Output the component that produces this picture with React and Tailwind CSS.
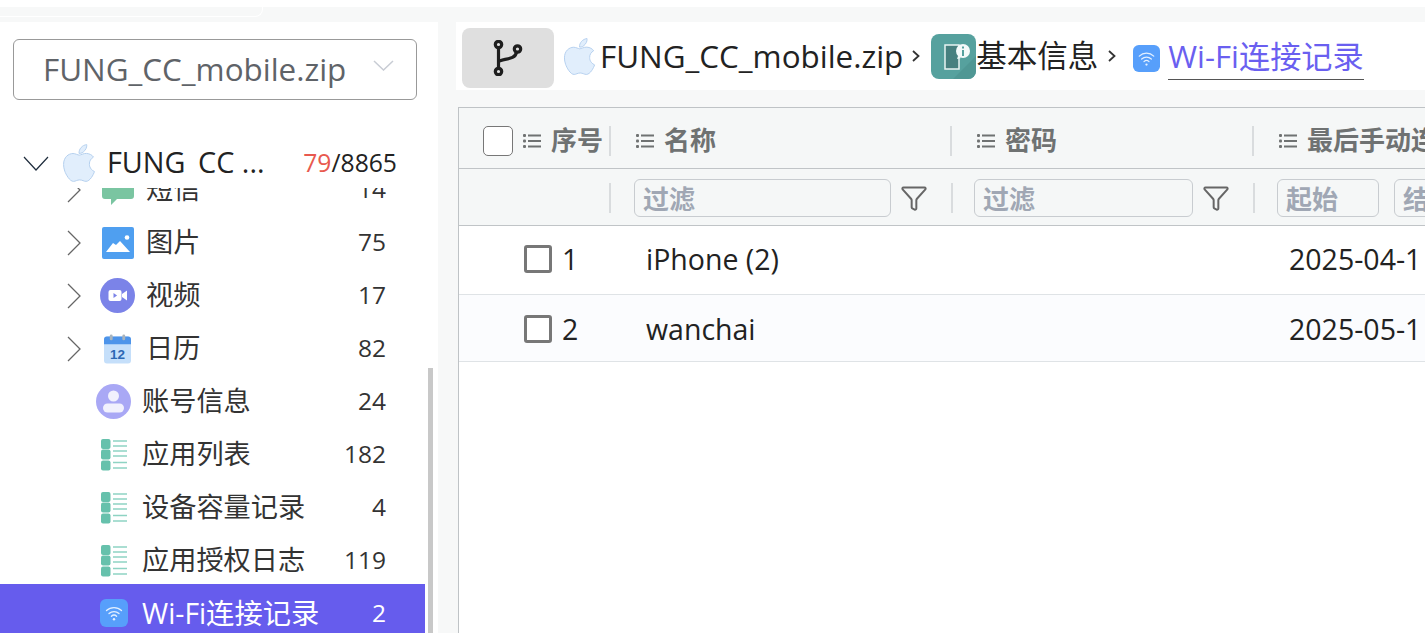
import { Funnel } from "lucide-react";
import { FaApple } from "react-icons/fa";

const AppleIcon = ({ className }) => (
  <FaApple className={className} fill="#e1eefc" stroke="#b4cfee" strokeWidth={12} />
);

const WifiIcon = ({ className }) => (
  <svg viewBox="0 0 28 28" className={className}>
    <rect width="28" height="28" rx="6" fill="#579ffb" />
    <g fill="none" stroke="#e4f0ff" strokeWidth="1.3" strokeLinecap="round">
      <path d="M6.5 11.5a11 11 0 0 1 15 0" />
      <path d="M9 14.5a7.4 7.4 0 0 1 10 0" />
      <path d="M11.4 17.2a3.8 3.8 0 0 1 5.2 0" />
    </g>
    <circle cx="14" cy="20.3" r="1.2" fill="#e4f0ff" />
  </svg>
);

const ListIcon = ({ className }) => (
  <svg viewBox="0 0 26 32" className={className}>
    <g fill="#66c1ac">
      <rect x="0" y="0" width="9.500" height="10" rx="2" />
      <rect x="0" y="10.500" width="9.500" height="10" rx="2" />
      <rect x="0" y="21.500" width="9.500" height="10" rx="2" />
    </g>
    <g stroke="#8ed3c3" strokeWidth="1.5">
      <path d="M12 2h14M12 7h14M12 12h14M12 17h14M12 23.500h14M12 29h14" />
    </g>
  </svg>
);

const ChatIcon = ({ className }) => (
  <svg viewBox="0 0 32 32" className={className}>
    <path d="M3 0h26a3 3 0 0 1 3 3v19a3 3 0 0 1-3 3H15l-6 6v-6H3a3 3 0 0 1-3-3V3a3 3 0 0 1 3-3z" fill="#7ac5a1" />
  </svg>
);

const ImageIcon = ({ className }) => (
  <svg viewBox="0 0 32 32" className={className}>
    <rect width="32" height="32" rx="2" fill="#4f9ff0" />
    <circle cx="25" cy="10.500" r="2.300" fill="#fff" />
    <path d="M4 25l7-9 3 2 4-4 10 11z" fill="#fff" />
  </svg>
);

const VideoIcon = ({ className }) => (
  <svg viewBox="0 0 35 35" className={className}>
    <circle cx="17.5" cy="17.5" r="17.5" fill="#7b83e8" />
    <rect x="8.5" y="12" width="13" height="11" rx="2" fill="#fff" />
    <path d="M22 16l5-3.5v10L22 19z" fill="#fff" />
    <path d="M13.5 15v5l3.6-2.5z" fill="#7b83e8" />
  </svg>
);

const CalendarIcon = ({ className }) => (
  <svg viewBox="0 0 28 30" className={className}>
    <rect x="0" y="2" width="28" height="28" rx="3" fill="#c5dffa" />
    <path d="M3 2h22a3 3 0 0 1 3 3v5H0V5a3 3 0 0 1 3-3z" fill="#4d94ea" />
    <rect x="6" y="0" width="3" height="6" rx="1.5" fill="#a9b4bd" />
    <rect x="19" y="0" width="3" height="6" rx="1.5" fill="#a9b4bd" />
    <text x="14" y="25" textAnchor="middle" fontSize="14" fontWeight="700" fill="#2d68b4" fontFamily="Liberation Sans, sans-serif">12</text>
  </svg>
);

const PersonIcon = ({ className }) => (
  <svg viewBox="0 0 35 35" className={className}>
    <circle cx="17.5" cy="17.5" r="17.5" fill="#a9a8f5" />
    <circle cx="17.5" cy="12" r="5.5" fill="#f1f1fd" />
    <rect x="7" y="19.5" width="21" height="9" rx="4.5" fill="#f1f1fd" />
  </svg>
);

const BranchIcon = ({ className }) => (
  <svg viewBox="0 0 30 36" className={className} fill="none" stroke="#1e1e1e" strokeWidth="3.200">
    <circle cx="5.500" cy="4.500" r="3.200" />
    <circle cx="5.500" cy="31.500" r="3.200" />
    <circle cx="24.500" cy="9" r="3.200" />
    <path d="M5.500 7.700v20.600" />
    <path d="M5.500 22c2-4 17-1 18-10" />
  </svg>
);

const InfoIcon = ({ className }) => (
  <svg viewBox="0 0 45 45" className={className}>
    <rect width="45" height="45" rx="8" fill="#56a19e" />
    <path d="M22 45L45 22v15a8 8 0 0 1-8 8z" fill="#4f9794" />
    <rect x="14" y="11" width="14" height="24" fill="#47807f" stroke="#e8f3f2" strokeWidth="1.5" />
    <circle cx="32" cy="17" r="7" fill="#f4fafa" />
    <path d="M27 22l-1 3 4-1z" fill="#f4fafa" />
    <rect x="31" y="16" width="2" height="6" fill="#56a19e" />
    <rect x="31" y="12.500" width="2" height="2" fill="#56a19e" />
  </svg>
);

const TreeArrow = () => (
  <svg viewBox="0 0 14 26" className="w-[14px] h-[26px] block" fill="none" stroke="#666" strokeWidth="1.300">
    <path d="M1 1l12 12L1 25" />
  </svg>
);

const CrumbArrow = ({ className }) => (
  <svg viewBox="0 0 8 12" className={`${className} w-[8px] h-[12px] shrink-0`} fill="none" stroke="#333" strokeWidth="1.800">
    <path d="M1 1l5.500 5L1 11" />
  </svg>
);

const treeRows = [
  { icon: <ChatIcon className="ml-[6px] w-[32px] h-[32px]" />, label: "短信", count: "14", arrow: true },
  { icon: <ImageIcon className="ml-[6px] w-[32px] h-[32px]" />, label: "图片", count: "75", arrow: true },
  { icon: <VideoIcon className="ml-[4px] w-[35px] h-[35px]" />, label: "视频", count: "17", arrow: true },
  { icon: <CalendarIcon className="ml-[8px] w-[27px] h-[30px]" />, label: "日历", count: "82", arrow: true },
  { icon: <PersonIcon className="w-[35px] h-[35px]" />, label: "账号信息", count: "24" },
  { icon: <ListIcon className="ml-[5px] w-[26px] h-[32px]" />, label: "应用列表", count: "182" },
  { icon: <ListIcon className="ml-[5px] w-[26px] h-[32px]" />, label: "设备容量记录", count: "4" },
  { icon: <ListIcon className="ml-[5px] w-[26px] h-[32px]" />, label: "应用授权日志", count: "119" },
];

function TreeRow({ row }) {
  return (
    <div className="flex items-center h-[53px] text-[27.2px] text-[#333]">
      <div className="w-[96px] shrink-0 pl-[67px]">
        {row.arrow && <TreeArrow />}
      </div>
      <div className="w-[46px] shrink-0 flex">{row.icon}</div>
      <span className={row.arrow ? "pl-[4px]" : ""}>{row.label}</span>
      <span className="ml-auto pr-[39px] text-[24.5px]">{row.count}</span>
    </div>
  );
}

function Sidebar() {
  return (
    <aside className="w-[438px] shrink-0 bg-white flex flex-col min-h-0">
      <div className="mt-[17px] ml-[13px] w-[404px] h-[61px] shrink-0 border border-[#999] rounded-md flex items-center pl-[29px] pr-[22px] pb-[2px] text-[31.4px] text-[#5f6368]">
        <span>FUNG_CC_mobile.zip</span>
        <svg viewBox="0 0 21 11" className="ml-auto w-[21px] h-[11px] -mt-[6px]" fill="none" stroke="#c8ccd4" strokeWidth="1.500">
          <path d="M1 1l9.500 9L20 1" />
        </svg>
      </div>
      <div className="mt-[45px] h-[36px] shrink-0 flex items-center text-[#222]">
        <svg viewBox="0 0 26 15" className="ml-[23px] w-[26px] h-[15px] shrink-0" fill="none" stroke="#1f2d3d" strokeWidth="1.200">
          <path d="M1 1l12 13L25 1" />
        </svg>
        <AppleIcon className="ml-[9px] w-[42px] h-[42px] shrink-0" />
        <span className="ml-[7px] -mt-[3px] h-[27px] leading-[27px] overflow-hidden text-[28.8px]">FUNG_CC ...</span>
        <span className="ml-auto pr-[41px] text-[24.7px]">
          <span className="text-[#e8594f]">79</span>/8865
        </span>
      </div>
      <div className="mt-[7px] flex-1 min-h-0 flex">
        <div className="w-[425px] overflow-hidden">
          <div className="-mt-[25px]">
            {treeRows.map((row) => (
              <TreeRow key={row.label} row={row} />
            ))}
            <div className="-mt-[3px] h-[58px] bg-[#665ced] text-white flex items-center text-[28.3px]">
              <div className="w-[100px] shrink-0" />
              <WifiIcon className="w-[28px] h-[28px]" />
              <span className="ml-[14px]">Wi-Fi连接记录</span>
              <span className="ml-auto pr-[39px] text-[24.5px]">2</span>
            </div>
          </div>
        </div>
        <div className="ml-[3px] w-[5px] mt-[180px] bg-[#c8c8c8]" />
      </div>
    </aside>
  );
}

function Breadcrumb() {
  return (
    <div className="h-[68px] shrink-0 bg-white flex items-center text-[#222] whitespace-nowrap pl-[6px]">
      <div className="mt-[4px] w-[92px] h-[60px] shrink-0 bg-[#dfdfdf] rounded-lg flex items-center justify-center">
        <BranchIcon className="w-[30px] h-[36px]" />
      </div>
      <AppleIcon className="ml-[5px] w-[41px] h-[41px] shrink-0" />
      <span className="text-[31.4px]">FUNG_CC_mobile.zip</span>
      <CrumbArrow className="ml-[9px]" />
      <InfoIcon className="ml-[11px] w-[45px] h-[45px] shrink-0" />
      <span className="text-[30.5px]">基本信息</span>
      <CrumbArrow className="ml-[10px]" />
      <WifiIcon className="ml-[17px] w-[27px] h-[27px] shrink-0 mt-[4px]" />
      <span className="ml-[8px] text-[31.2px] text-[#6a5ff0] border-b border-[#555] leading-[46px]">Wi-Fi连接记录</span>
    </div>
  );
}

const ColumnIcon = () => (
  <svg viewBox="0 0 18 14" className="w-[18px] h-[14px] shrink-0 ml-[1px]" fill="#6f7272">
    <rect x="0" y="0" width="3" height="3" rx="1" />
    <rect x="0" y="5.500" width="3" height="3" rx="1" />
    <rect x="0" y="11" width="3" height="3" rx="1" />
    <rect x="5" y="0.500" width="13" height="2" />
    <rect x="5" y="6" width="13" height="2" />
    <rect x="5" y="11.500" width="13" height="2" />
  </svg>
);

const HeaderCell = ({ className, label }) => (
  <div className={`${className} shrink-0 h-[30px] flex items-center border-r-2 border-[#d9dcde] overflow-hidden whitespace-nowrap`}>
    <ColumnIcon />
    <span className="ml-[10px]">{label}</span>
  </div>
);

const FilterInput = ({ className, label }) => (
  <div className={`${className} shrink-0 h-[38px] border border-[#c8ccd0] rounded-md pl-[8px] pt-[3px] flex items-center text-[26px] font-bold text-[#a0a7b4] overflow-hidden whitespace-nowrap`}>
    {label}
  </div>
);

const FilterIcon = ({ className }) => (
  <Funnel className={`${className} w-[28px] h-[28px] text-[#666] shrink-0`} strokeWidth={1.7} />
);

const Separator = ({ className }) => (
  <div className={`${className} w-[2px] h-[30px] bg-[#d9dcde] shrink-0`} />
);

function TableRow({ num, name, date, className }) {
  return (
    <div className={`${className} flex items-center text-[28.5px] text-[#222] border-b border-[#dfe3e6] whitespace-nowrap`}>
      <div className="w-[65px] shrink-0" />
      <div className="w-[28px] h-[28px] rounded-[3px] border-[3px] border-[#777] bg-white shrink-0" />
      <span className="ml-[10px] w-[84px] shrink-0">{num}</span>
      <span className="w-[643px] shrink-0">{name}</span>
      <span>{date}</span>
    </div>
  );
}

function Table() {
  return (
    <div className="mt-[17px] flex-1 min-h-0 ml-[2px] bg-white border-l border-t border-[#bfc3c6] overflow-hidden">
      <div className="h-[61px] pt-[5px] bg-[#f5f7f7] border-b border-[#c0c4c7] flex items-center text-[26px] font-bold text-[#6f7272]">
        <div className="w-[24px] shrink-0" />
        <div className="w-[30px] h-[30px] rounded-[5px] border border-[#777] bg-white shrink-0" />
        <HeaderCell className="ml-[9px] w-[89px]" label="序号" />
        <div className="w-[24px] shrink-0" />
        <HeaderCell className="w-[317px]" label="名称" />
        <div className="w-[24px] shrink-0" />
        <HeaderCell className="w-[278px]" label="密码" />
        <div className="w-[24px] shrink-0" />
        <div className="flex items-center whitespace-nowrap overflow-hidden">
          <ColumnIcon />
          <span className="ml-[10px]">最后手动连接时间</span>
        </div>
      </div>
      <div className="h-[57px] pt-[2px] bg-[#f5f7f7] border-b border-[#c0c4c7] flex items-center">
        <div className="w-[150px] shrink-0" />
        <Separator />
        <FilterInput className="ml-[23px] w-[257px]" label="过滤" />
        <FilterIcon className="ml-[9px]" />
        <Separator className="ml-[23px]" />
        <FilterInput className="ml-[21px] w-[219px]" label="过滤" />
        <FilterIcon className="ml-[9px]" />
        <Separator className="ml-[23px]" />
        <FilterInput className="ml-[22px] w-[102px]" label="起始" />
        <FilterInput className="ml-[15px] w-[102px]" label="结束" />
      </div>
      <TableRow className="h-[69px] pb-[2px]" num="1" name="iPhone (2)" date="2025-04-1" />
      <TableRow className="h-[67px] pt-[2px] bg-[#fbfcfe]" num="2" name="wanchai" date="2025-05-1" />
    </div>
  );
}

export default function App() {
  return (
    <div className="w-[1425px] h-[633px] overflow-hidden flex flex-col bg-[#f7f8f8] font-['Open_Sans','Noto_Sans_CJK_SC',sans-serif]">
      <div className="h-[7px] shrink-0 bg-white">
        <div className="w-[263px] h-[17px] rounded-br-lg border-b border-r border-white" />
      </div>
      <div className="mt-[15px] flex-1 min-h-0 flex">
        <Sidebar />
        <main className="ml-[18px] flex-1 min-w-0 flex flex-col">
          <Breadcrumb />
          <Table />
        </main>
      </div>
    </div>
  );
}
